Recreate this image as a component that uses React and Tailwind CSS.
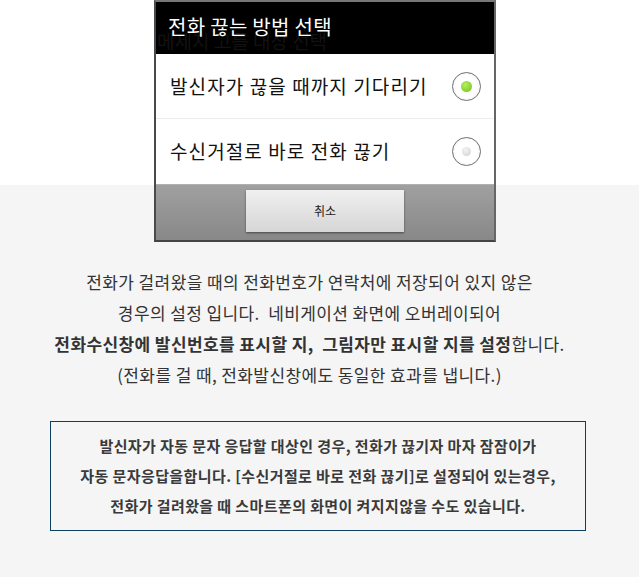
export default function App() {
  return (
    <div className="min-h-[577px] w-[639px] bg-[linear-gradient(to_bottom,#ffffff_185px,#f5f5f5_185px)] font-['Noto_Sans_CJK_KR','Noto_Sans',sans-serif] text-[#333]">
      {/* phone dialog capture */}
      <div className="ml-[154px] w-[342px] border-x-2 border-t-2 border-b-2 border-l-[#4a4a4a] border-r-[#666] border-t-[#777] border-b-[#444] bg-white">
        <div className="relative h-[52px] bg-black overflow-hidden">
          <span className="absolute left-[1px] top-[29px] text-[19px] leading-none text-[#121212]">메세지 고를 대상 선택</span>
          <span className="absolute left-[12px] top-[11px] text-[20px] leading-[28px] text-white tracking-[0.3px]">전화 끊는 방법 선택</span>
        </div>
        <div className="flex h-[65px] items-center justify-between pl-[14px] pr-[13px] border-b border-[#ececec]">
          <span className="text-[19px] tracking-[1.1px] text-[#111]">발신자가 끊을 때까지 기다리기</span>
          <Radio checked />
        </div>
        <div className="flex h-[65px] items-center justify-between pl-[14px] pr-[13px]">
          <span className="text-[19px] tracking-[1.1px] text-[#111]">수신거절로 바로 전화 끊기</span>
          <Radio />
        </div>
        <div className="flex h-[56px] justify-center pt-[5px] bg-[linear-gradient(to_bottom,#a0a0a0,#888)] border-t border-[#b0b0b0]">
          <div className="flex h-[42px] w-[158px] items-center justify-center bg-[linear-gradient(to_bottom,#f0f0f0,#d6d6d6)] shadow-[0_1px_2px_rgba(0,0,0,0.5)] text-[12px] text-[#222]">
            취소
          </div>
        </div>
      </div>

      {/* description */}
      <div className="mt-[24px] pr-[20px] text-center text-[17px] leading-[31px] tracking-[0.4px]">
        <p>전화가 걸려왔을 때의 전화번호가 연락처에 저장되어 있지 않은</p>
        <p>경우의 설정 입니다.&nbsp; 네비게이션 화면에 오버레이되어</p>
        <p>
          <b className="font-bold">전화수신창에 발신번호를 표시할 지,&nbsp; 그림자만 표시할 지를 설정</b>합니다.
        </p>
        <p>(전화를 걸 때, 전화발신창에도 동일한 효과를 냅니다.)</p>
      </div>

      <div className="ml-[50px] mt-[31px] w-[536px] border border-[#0d3f5f] py-[9px] text-center text-[15px] font-bold leading-[30px] tracking-[0.4px] text-[#3a3a3a]">
        <p>발신자가 자동 문자 응답할 대상인 경우, 전화가 끊기자 마자 잠잠이가</p>
        <p>자동 문자응답을합니다. [수신거절로 바로 전화 끊기]로 설정되어 있는경우,</p>
        <p>전화가 걸려왔을 때 스마트폰의 화면이 켜지지않을 수도 있습니다.</p>
      </div>
    </div>
  )
}

function Radio({ checked }) {
  return (
    <div className="flex h-[29px] w-[29px] items-center justify-center rounded-full border-[1.5px] border-[#6f6f6f] bg-[radial-gradient(circle,#ffffff_55%,#ececec)]">
      {checked ? (
        <div className="h-[11px] w-[11px] rounded-full bg-[radial-gradient(circle_at_40%_35%,#b6ef5a,#6cc11a)]" />
      ) : (
        <div className="h-[9px] w-[9px] rounded-full bg-[radial-gradient(circle_at_40%_35%,#f4f4f4,#cfcfcf)]" />
      )}
    </div>
  )
}
